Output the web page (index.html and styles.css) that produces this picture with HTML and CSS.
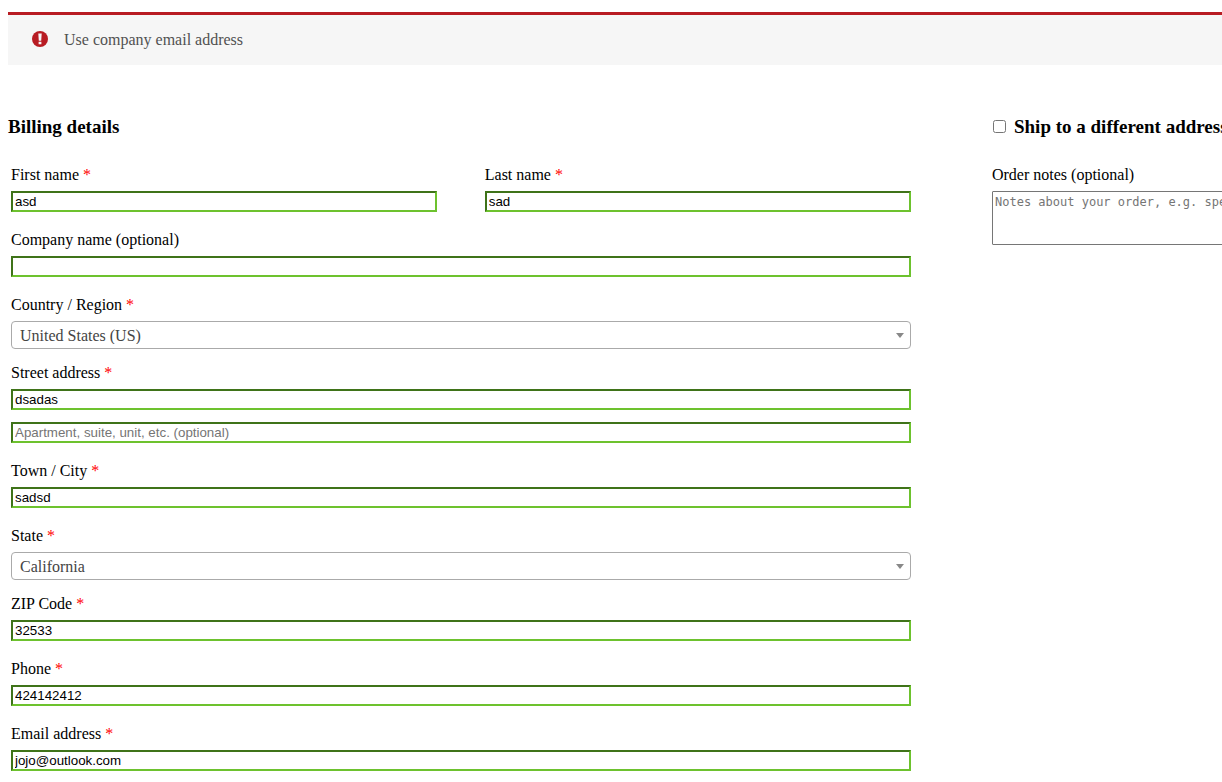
FILE: index.html
```html
<!DOCTYPE html>
<html lang="en">
<head>
<meta charset="utf-8">
<title>Checkout</title>
<link rel="stylesheet" href="styles.css">
</head>
<body>
<main class="checkout">
  <div class="notice" role="alert">
    <svg class="notice-icon" viewBox="0 0 16 16" aria-hidden="true"><circle cx="8" cy="8" r="8" fill="#b81c23"/><path d="M6.3 2.6h3.4l-.5 7.2H6.8zM6.6 10.7h2.8v2.6H6.6z" fill="#f6f5f8"/></svg>
    <span>Use company email address</span>
  </div>
  <form class="columns">
    <section class="column">
      <h3 class="heading">Billing details</h3>
      <div class="fields">
        <div class="pair">
          <p class="row"><label class="label" for="first">First name <abbr class="required">*</abbr></label><input class="input" id="first" type="text" value="asd"></p>
          <p class="row"><label class="label" for="last">Last name <abbr class="required">*</abbr></label><input class="input" id="last" type="text" value="sad"></p>
        </div>
        <p class="row"><label class="label" for="company">Company name (optional)</label><input class="input" id="company" type="text"></p>
        <p class="row row-select"><label class="label" for="country">Country / Region <abbr class="required">*</abbr></label><select class="select" id="country"><option>United States (US)</option></select></p>
        <p class="row"><label class="label" for="street">Street address <abbr class="required">*</abbr></label><input class="input" id="street" type="text" value="dsadas"></p>
        <p class="row"><input class="input" type="text" aria-label="Apartment, suite, unit, etc." placeholder="Apartment, suite, unit, etc. (optional)"></p>
        <p class="row"><label class="label" for="city">Town / City <abbr class="required">*</abbr></label><input class="input" id="city" type="text" value="sadsd"></p>
        <p class="row row-select"><label class="label" for="state">State <abbr class="required">*</abbr></label><select class="select" id="state"><option>California</option></select></p>
        <p class="row"><label class="label" for="zip">ZIP Code <abbr class="required">*</abbr></label><input class="input" id="zip" type="text" value="32533"></p>
        <p class="row"><label class="label" for="phone">Phone <abbr class="required">*</abbr></label><input class="input" id="phone" type="tel" value="424142412"></p>
        <p class="row"><label class="label" for="email">Email address <abbr class="required">*</abbr></label><input class="input" id="email" type="email" value="jojo@outlook.com"></p>
      </div>
    </section>
    <section class="column">
      <h3 class="heading heading-ship"><label class="ship"><input class="checkbox" type="checkbox"><span>Ship to a different address</span></label></h3>
      <div class="fields">
        <p class="row"><label class="label" for="notes">Order notes (optional)</label><textarea class="notes" id="notes" placeholder="Notes about your order, e.g. special notes for delivery."></textarea></p>
      </div>
    </section>
  </form>
</main>
</body>
</html>
```
FILE: styles.css
```css
* {
  box-sizing: border-box;
}

body {
  margin: 12px 0 0 8px;
  overflow: hidden;
  background: #fff;
  color: #000;
  font-family: "Liberation Serif", "Times New Roman", serif;
  font-size: 16px;
}

/* The checkout runs wider than the window. */
.checkout {
  width: 155.4%;
}

.notice {
  display: flex;
  align-items: flex-start;
  gap: 16px;
  padding: 16px 24px;
  border-top: 3px solid #b81c23;
  background: #f6f6f6;
  color: #515151;
  line-height: 18px;
}

.notice-icon {
  width: 16px;
  height: 16px;
}

.columns {
  display: grid;
  grid-template-columns: 48% 48%;
  column-gap: 4%;
  align-items: start;
  margin-top: 52px;
}

.heading {
  margin: 0;
  font-size: 19px;
  line-height: 20px;
}

.heading-ship {
  padding-left: 4px;
}

.ship {
  display: flex;
  align-items: flex-start;
  gap: 8px;
}

.checkbox {
  width: 13px;
  height: 13px;
  margin: 3px 0 0;
}

.fields {
  padding: 22px 3px 0;
}

.pair {
  display: grid;
  grid-template-columns: 1fr 1fr;
  column-gap: 48px;
}

.row {
  display: flex;
  flex-direction: column;
  margin: 0 0 12px;
}

.row-select {
  margin-bottom: 8px;
}

.label {
  line-height: 32px;
}

.required {
  color: #f00;
}

.input {
  width: 100%;
  height: 21px;
  padding: 1px 2px;
  border: 2px solid;
  border-color: #3f7319 #6dc22e #6dc22e #3f7319;
  background: #fff;
  color: #000;
  font-family: "Liberation Sans", Arial, sans-serif;
}

.input::placeholder,
.notes::placeholder {
  color: #757575;
}

.select {
  width: 100%;
  height: 28px;
  padding: 0 20px 0 8px;
  border: 1px solid #aaa;
  border-radius: 4px;
  appearance: none;
  background: #fff url("data:image/svg+xml,%3Csvg xmlns='http://www.w3.org/2000/svg' width='8' height='5'%3E%3Cpath d='M0 0h8L4 5z' fill='%23888'/%3E%3C/svg%3E") no-repeat right 6px center;
  color: #444;
  font: inherit;
}

.notes {
  width: 100%;
  height: 54px;
  padding: 2px;
  border: 1px solid #767676;
  border-radius: 1px;
  font-family: "DejaVu Sans Mono", monospace;
  font-size: 12px;
  line-height: 16px;
}
```
